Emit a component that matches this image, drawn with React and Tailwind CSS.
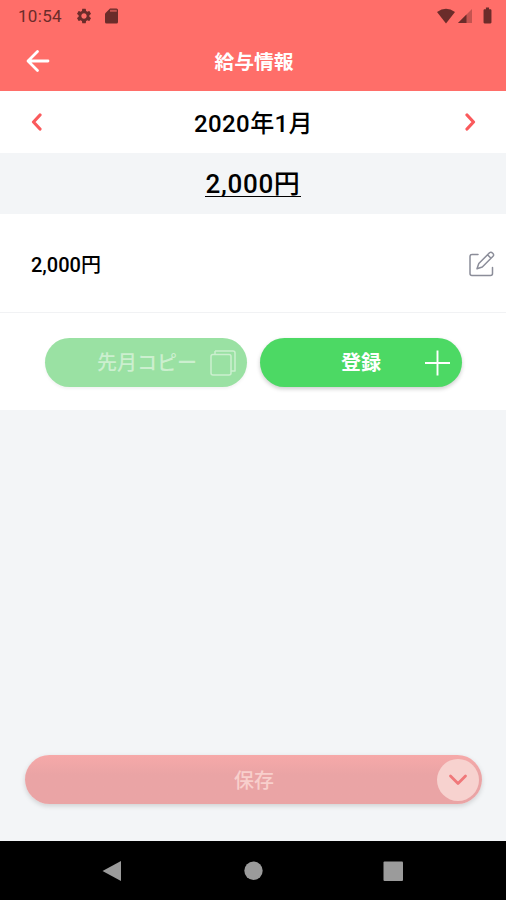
import { MdSettings, MdBatteryFull } from 'react-icons/md'

function StatusBar() {
  return (
    <div className="flex h-[31px] items-center justify-between pl-[18px] pr-[14px] text-[#6b2c2a]">
      <div className="flex items-center">
        <span className="w-[57px] pt-[2px] text-[17px] leading-none tracking-[0.3px]">10:54</span>
        <MdSettings size={18} />
        <svg width="13" height="16" viewBox="0 0 13 16" fill="currentColor" className="ml-[12px]">
          <path d="M5 0.500H11.500Q13 0.500 13 2V14Q13 15.500 11.500 15.500H1.500Q0 15.500 0 14V5.500Z" />
          <path d="M5 2.800H11.800" stroke="#ff6e69" strokeWidth="2" opacity="0.600" />
        </svg>
      </div>
      <div className="flex items-center">
        <svg width="20" height="16" viewBox="0 0 20 16" fill="currentColor">
          <path d="M1 4Q10-2.500 19 4L10 15.500Z" />
        </svg>
        <svg width="16" height="16" viewBox="0 0 16 16" fill="currentColor" className="ml-[1px]">
          <path d="M15 1V15H1Z" opacity="0.4" />
          <path d="M9.500 6.500V15H1Z" />
        </svg>
        <MdBatteryFull size={19} className="-mr-[5px] ml-[5px]" />
      </div>
    </div>
  )
}

function Header() {
  return (
    <header className="grid h-[60px] grid-cols-[90px_1fr_90px] items-center">
      <button className="pl-[26px] text-white">
        <svg width="24" height="24" viewBox="0 0 24 24" fill="none" stroke="currentColor" strokeWidth="2.800" strokeLinecap="round" strokeLinejoin="round">
          <path d="M11.500 2.500L2 12L11.500 21.500M2.500 12H22" />
        </svg>
      </button>
      <h1 className="pt-[3px] pl-[2px] text-center text-[19.800px] leading-none font-bold text-white">給与情報</h1>
    </header>
  )
}

function Chevron({ d, width = 12, height = 18 }) {
  return (
    <svg width={width} height={height} viewBox={`0 0 ${width} ${height}`} fill="none" stroke="#fa5a5c" strokeWidth="3.200" strokeLinecap="round" strokeLinejoin="round">
      <path d={d} />
    </svg>
  )
}

function MonthPicker() {
  return (
    <div className="flex h-[62px] items-center justify-between bg-white pr-[30px] pl-[31px]">
      <button><Chevron d="M9 2L2.500 9L9 16" /></button>
      <span className="pt-[3px] text-[24px] leading-none font-medium tracking-[0.4px] text-black">
        2020年1月
      </span>
      <button><Chevron d="M3 2L9.500 9L3 16" /></button>
    </div>
  )
}

function SalaryRow() {
  return (
    <div className="flex h-[99px] items-center justify-between border-b border-[#f1f2f4] bg-white pr-[10px] pl-[31px]">
      <span className="pt-[3px] text-[20px] leading-none font-medium text-black">2,000円</span>
      <button className="pt-[1px]">
        <svg width="28" height="28" viewBox="0 0 28 28" fill="none" stroke="#8b8d99" strokeWidth="1.500" strokeLinecap="round" strokeLinejoin="round">
          <path d="M10 4.500H4Q2 4.500 2 6.500V23.500Q2 25.500 4 25.500H22.500Q24.500 25.500 24.500 23.500V17.500" />
          <path d="M9 18.800L10.800 13.500L21.500 2.800Q23 1.500 24.700 3.200T25 6.300L14.300 17ZM19.500 4.800L23 8.300" />
        </svg>
      </button>
    </div>
  )
}

function ActionButtons() {
  return (
    <div className="flex h-[97px] items-center gap-[13px] bg-white pt-[1px] pl-[45px]">
      <button className="grid h-[49px] w-[202px] grid-cols-[1fr_26px] items-center rounded-full bg-[#9ae1a3] pr-[11px] pl-[39px] text-[#ccefcf] shadow-[0_2px_3px_rgba(0,0,0,0.05)]">
        <span className="pt-[2px] text-center text-[20px] leading-none font-medium">先月コピー</span>
        <svg width="26" height="26" viewBox="0 0 26 26" fill="none" stroke="currentColor" strokeWidth="1.500" strokeLinejoin="round" className="mt-[1px]">
          <rect x="1" y="4.500" width="20" height="20.500" rx="2" />
          <path d="M5 1H23Q25 1 25 3V21H21M5 1V4.500" />
        </svg>
      </button>
      <button className="grid h-[49px] w-[202px] grid-cols-[1fr_26px] items-center rounded-full bg-[#4cd964] pr-[12px] pl-[38px] text-white shadow-[0_2px_4px_rgba(0,0,0,0.2)]">
        <span className="pt-[2px] text-center text-[20px] leading-none font-bold">登録</span>
        <svg width="26" height="26" viewBox="0 0 26 26" fill="none" stroke="currentColor" strokeWidth="1.900" className="mt-[1px]">
          <path d="M13.500 0.500V25.500M1 13H26" />
        </svg>
      </button>
    </div>
  )
}

function SaveButton() {
  return (
    <button className="mr-[24px] mb-[37px] ml-[25px] grid h-[49px] grid-cols-[1fr_42px] items-center rounded-full bg-linear-to-b from-[#f6a9a9] to-[#eaa4a5] to-40% pr-[3px] pl-[46px] text-[#f8cfcc] shadow-[0_2px_5px_rgba(0,0,0,0.15)]">
      <span className="pt-[3px] text-center text-[20px] leading-none font-medium">保存</span>
      <span className="flex size-[42px] items-center justify-center rounded-full bg-[#f7d2cf]">
        <svg width="20" height="14" viewBox="0 0 20 14" fill="none" stroke="#f0787a" strokeWidth="2.800" strokeLinecap="round" strokeLinejoin="round">
          <path d="M2.500 3L10 10.500L17.500 3" />
        </svg>
      </span>
    </button>
  )
}

function NavBar() {
  return (
    <nav className="h-[59px] bg-black text-[#9b9b9b]">
      <svg width="506" height="59" viewBox="0 0 506 59" fill="currentColor">
        <path d="M102.500 30L121 20V40Z" />
        <circle cx="253.500" cy="29.700" r="9.200" />
        <rect x="383.500" y="20.500" width="19.500" height="19.500" rx="1" />
      </svg>
    </nav>
  )
}

export default function App() {
  return (
    <div className="flex h-[900px] w-[506px] flex-col overflow-hidden bg-[#f3f5f7] font-['Roboto','Noto_Sans_CJK_JP',sans-serif]">
      <div className="bg-[#ff6e69]">
        <StatusBar />
        <Header />
      </div>
      <MonthPicker />
      <div className="flex h-[61px] items-center justify-center pt-[1px]">
        <span className="flex h-[26px] items-end border-b border-black text-[26px] leading-[23px] font-medium tracking-[0.7px] text-black">
          2,000円
        </span>
      </div>
      <SalaryRow />
      <ActionButtons />
      <main className="flex-1" />
      <SaveButton />
      <NavBar />
    </div>
  )
}
